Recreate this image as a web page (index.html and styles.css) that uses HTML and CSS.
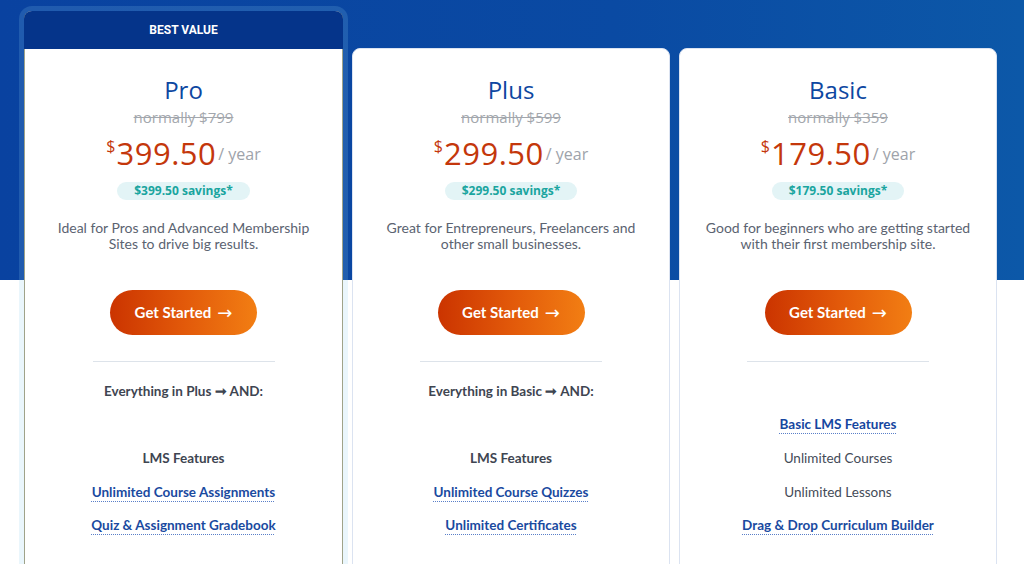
FILE: index.html
```html
<!DOCTYPE html>
<html lang="en">
<head>
<meta charset="utf-8">
<title>Pricing</title>
<link rel="stylesheet" href="styles.css">
</head>
<body>
<section class="pricing">
  <div class="card card-featured">
    <div class="badge">BEST VALUE</div>
    <div class="card-body">
      <h2 class="plan">Pro</h2>
      <div class="was">normally $799</div>
      <div class="price"><span class="cur">$</span><span class="amt">399.50</span><span class="per">/ year</span></div>
      <div class="save">$399.50 savings*</div>
      <p class="desc">Ideal for Pros and Advanced Membership Sites to drive big results.</p>
      <a class="btn" href="#">Get Started <span class="arr">→</span></a>
      <hr class="divider">
      <ul class="features">
        <li class="strong">Everything in Plus ➞ AND:</li>
        <li></li>
        <li class="strong">LMS Features</li>
        <li><span class="link">Unlimited Course Assignments</span></li>
        <li><span class="link">Quiz &amp; Assignment Gradebook</span></li>
      </ul>
    </div>
  </div>

  <div class="card">
    <div class="card-body">
      <h2 class="plan">Plus</h2>
      <div class="was">normally $599</div>
      <div class="price"><span class="cur">$</span><span class="amt">299.50</span><span class="per">/ year</span></div>
      <div class="save">$299.50 savings*</div>
      <p class="desc">Great for Entrepreneurs, Freelancers and other small businesses.</p>
      <a class="btn" href="#">Get Started <span class="arr">→</span></a>
      <hr class="divider">
      <ul class="features">
        <li class="strong">Everything in Basic ➞ AND:</li>
        <li></li>
        <li class="strong">LMS Features</li>
        <li><span class="link">Unlimited Course Quizzes</span></li>
        <li><span class="link">Unlimited Certificates</span></li>
      </ul>
    </div>
  </div>

  <div class="card">
    <div class="card-body">
      <h2 class="plan">Basic</h2>
      <div class="was">normally $359</div>
      <div class="price"><span class="cur">$</span><span class="amt">179.50</span><span class="per">/ year</span></div>
      <div class="save">$179.50 savings*</div>
      <p class="desc">Good for beginners who are getting started with their first membership site.</p>
      <a class="btn" href="#">Get Started <span class="arr">→</span></a>
      <hr class="divider">
      <ul class="features">
        <li></li>
        <li><span class="link link-strong">Basic LMS Features</span></li>
        <li>Unlimited Courses</li>
        <li>Unlimited Lessons</li>
        <li><span class="link">Drag &amp; Drop Curriculum Builder</span></li>
      </ul>
    </div>
  </div>
</section>
</body>
</html>
```

FILE: styles.css
```css
* { box-sizing: border-box; }

html, body {
  margin: 0;
  padding: 0;
}

body {
  font-family: Lato, "Open Sans", sans-serif;
  background-color: #ffffff;
  background-image: linear-gradient(90deg, #0942a0 0%, #0a4aa3 60%, #0c58a8 100%);
  background-size: 100% 280px;
  background-repeat: no-repeat;
  color: #3d4450;
  overflow: hidden;
}

.pricing {
  display: flex;
  align-items: flex-start;
  gap: 9px;
  padding: 11px 26px 0 24px;
}

.card {
  flex: 0 0 318px;
  margin-top: 37px;
  background: #ffffff;
  border: 1px solid #dbe3f1;
  border-radius: 8px 8px 0 0;
}

.card-featured {
  flex: 0 0 319px;
  margin-top: 0;
  border: 1px solid #9fa38a;
  border-top: none;
  border-radius: 8px 8px 0 0;
  box-shadow: 0 0 0 5px rgba(140, 205, 240, 0.18);
}

.badge {
  height: 38px;
  margin: 0 -1px;
  background: #05348a;
  border-radius: 8px 8px 0 0;
  color: #ffffff;
  font-family: Roboto, "Liberation Sans", sans-serif;
  font-weight: 700;
  font-size: 12px;
  line-height: 38px;
  text-align: center;
}

.card-body {
  display: flex;
  flex-direction: column;
  align-items: center;
  text-align: center;
  padding: 26px 24px 60px;
}

.plan {
  margin: 0;
  font-family: "Open Sans", Lato, sans-serif;
  font-weight: 500;
  font-size: 24px;
  line-height: 30px;
  color: #0d47a1;
}

.was {
  margin-top: 2px;
  font-family: "Open Sans", sans-serif;
  font-size: 15px;
  line-height: 20px;
  color: #a3a7ad;
  text-decoration: line-through;
}

.price {
  margin-top: 8px;
  display: flex;
  align-items: baseline;
  justify-content: center;
  line-height: 36px;
  height: 36px;
}

.cur {
  align-self: flex-start;
  font-family: "Open Sans", sans-serif;
  font-size: 16px;
  line-height: 16px;
  margin-top: 3px;
  margin-right: 1px;
  color: #c4370b;
}

.amt {
  font-family: "Open Sans", sans-serif;
  font-size: 31px;
  color: #c4370b;
  letter-spacing: 0.5px;
}

.per {
  position: relative;
  top: -5px;
  margin-left: 2px;
  font-family: "Open Sans", sans-serif;
  font-size: 16px;
  color: #9ea3aa;
}

.save {
  margin-top: 11px;
  height: 18px;
  padding: 0 17px;
  border-radius: 9px;
  background: #e3f4f6;
  color: #1aa59f;
  font-family: "Open Sans", sans-serif;
  font-weight: 700;
  font-size: 12px;
  line-height: 18px;
}

.desc {
  margin: 20px 0 0;
  font-size: 14px;
  line-height: 16px;
  color: #5b6371;
  max-width: 270px;
}

.btn {
  margin-top: 38px;
  width: 147px;
  height: 45px;
  border-radius: 23px;
  background: linear-gradient(90deg, #cb3400 0%, #e2590a 50%, #f27e13 100%);
  color: #ffffff;
  font-weight: 700;
  font-size: 15px;
  line-height: 45px;
  text-decoration: none;
  display: flex;
  align-items: center;
  justify-content: center;
  gap: 6px;
}

.arr {
  font-family: "DejaVu Sans", sans-serif;
  font-size: 18px;
  font-weight: 400;
}

.divider {
  margin: 26px 0 0;
  width: 182px;
  border: none;
  border-top: 1px solid #dde3ea;
}

.features {
  list-style: none;
  margin: 12px 0 0;
  padding: 0;
  width: 100%;
}

.features li {
  height: 33.6px;
  display: flex;
  align-items: center;
  justify-content: center;
  font-size: 13.5px;
  color: #444b57;
}

.features li.strong {
  font-weight: 700;
  color: #3e4551;
}

.link {
  color: #1a4a9f;
  font-weight: 700;
  text-decoration: underline dotted #5a7fc8;
  text-underline-offset: 4px;
  text-decoration-thickness: 1px;
}

.link-strong {
  font-weight: 700;
  color: #1546a0;
}
```
